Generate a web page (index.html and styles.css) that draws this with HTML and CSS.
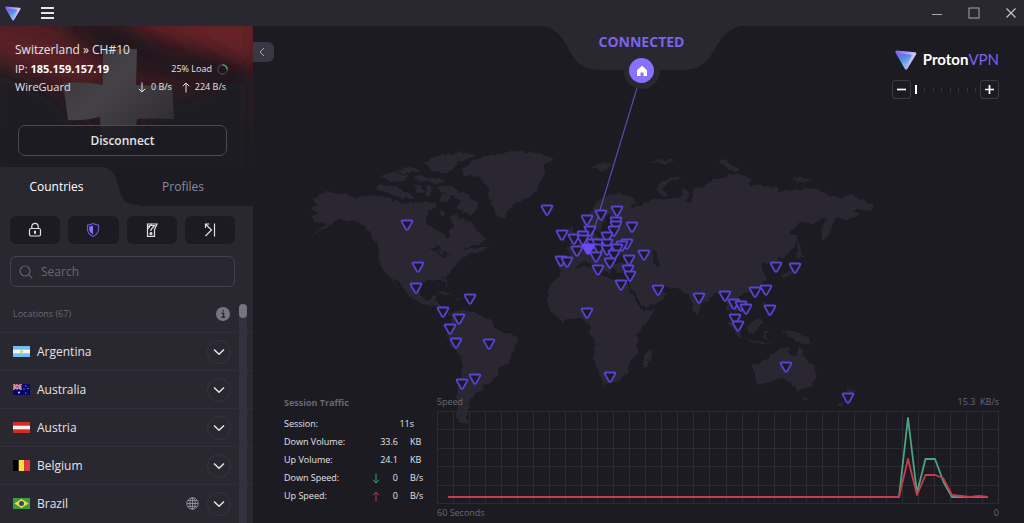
FILE: index.html
```html
<!DOCTYPE html>
<html lang="en">
<head>
<meta charset="utf-8">
<title>ProtonVPN</title>
<link rel="stylesheet" href="styles.css">
</head>
<body>
<svg class="defs" aria-hidden="true">
  <defs>
    <linearGradient id="logo-face" x1="0" y1="0" x2=".6" y2="1">
      <stop offset="0" stop-color="#7c5cf5"/><stop offset=".45" stop-color="#5b86e8"/><stop offset="1" stop-color="#6fe8d8"/>
    </linearGradient>
    <linearGradient id="logo-edge" x1="0" y1="0" x2="1" y2="0.2">
      <stop offset="0" stop-color="#7a5cf0"/><stop offset="1" stop-color="#d9ccff"/>
    </linearGradient>
    <symbol id="logo" viewBox="0 0 22 20">
      <path d="M1.5 0.5 20 2.2Q22 2.5 21 4.5L12.6 18.6Q11 20.800 9.800 18.400L.4 2.200Q0 .5 1.500 .5Z" fill="url(#logo-edge)"/>
      <path d="M1 3 15.500 4.600Q17.300 5 16.400 6.500L10.500 16.500 10.800 19.300Q10.200 19 9.800 18.400Z" fill="url(#logo-face)"/>
    </symbol>
    <symbol id="chevron" viewBox="0 0 12 8"><path d="M1 1.500 6 6.300 11 1.500" fill="none" stroke="currentColor" stroke-width="1.500"/></symbol>
    <symbol id="arrow-down" viewBox="0 0 8 11"><path d="M4 .5V10M.8 6.800 4 10 7.200 6.800" fill="none" stroke="currentColor"/></symbol>
    <symbol id="arrow-up" viewBox="0 0 8 11"><path d="M4 10.500V1M.8 4.200 4 1 7.200 4.200" fill="none" stroke="currentColor"/></symbol>
  </defs>
</svg>

<header class="titlebar">
  <svg class="titlebar-logo"><use href="#logo"/></svg>
  <button class="bare menu" aria-label="Menu"><svg width="13" height="12"><path d="M0 1H13M0 6H13M0 11H13" stroke="#e6e5ea" stroke-width="1.800"/></svg></button>
  <div class="window-buttons">
    <button class="bare" aria-label="Minimize"><svg width="12" height="12"><path d="M1 7.500H11" stroke="#aaa9b0"/></svg></button>
    <button class="bare" aria-label="Maximize"><svg width="12" height="12"><rect x="1" y="1" width="10" height="10" fill="none" stroke="#aaa9b0"/></svg></button>
    <button class="bare" aria-label="Close"><svg width="12" height="12"><path d="M1.500 1.500 10.500 10.500M10.500 1.500 1.500 10.500" stroke="#c4c3c9" stroke-width="1.200"/></svg></button>
  </div>
</header>

<div class="app">
  <aside class="sidebar">
    <section class="connection">
      <svg class="flag-backdrop" viewBox="0 0 253 141" preserveAspectRatio="none" aria-hidden="true">
        <defs>
          <linearGradient id="red" x1=".3" y1="0" x2=".2" y2="1">
            <stop offset="0" stop-color="#4f1e23"/><stop offset=".5" stop-color="#33191f"/><stop offset="1" stop-color="#1e1a21"/>
          </linearGradient>
          <linearGradient id="cross" x1="0" y1="0" x2="1" y2="1">
            <stop offset="0" stop-color="#373236"/><stop offset=".4" stop-color="#454247"/><stop offset="1" stop-color="#29272d"/>
          </linearGradient>
          <filter id="soft" x="-30%" y="-60%" width="160%" height="220%"><feGaussianBlur stdDeviation="9"/></filter>
        </defs>
        <rect width="253" height="141" fill="url(#red)"/>
        <g filter="url(#soft)">
          <path d="M50 -10 120 45 253 65V30L170 20 110 -10Z" fill="#24191e"/>
          <path d="M125 -10 170 5 253 38V-10Z" fill="#662427"/>
          <path d="M-10 0 40 10 110 50 80 55 -10 25Z" fill="#5c2226"/>
          <path d="M-10 35 60 70 100 120 253 90V150H-10Z" fill="#1f1a21"/>
          <path d="M160 75 253 52V160H120Z" fill="#1f1a21"/>
        </g>
        <path d="M103 24Q120 22 137 23L136 59Q155 61 172 58L174 93Q155 92 137 93L133 124H102L100 91Q82 95 68 94L63 57Q85 55 103 59Z" fill="url(#cross)"/>
        <path d="M0 141V105L253 95V141Z" fill="#1c1b22" opacity=".5"/>
      </svg>
      <div class="connection-info">
        <h1 class="server">Switzerland » CH#10</h1>
        <div class="info-row">
          <span>IP: <b>185.159.157.19</b></span>
          <span class="metric">25% Load
            <svg width="11" height="11"><circle cx="5.500" cy="5.500" r="4.700" fill="none" stroke="#55535d"/><path d="M5.500 .8A4.700 4.700 0 0 1 10.200 5.500" fill="none" stroke="#3fb68b" stroke-width="1.300"/></svg>
          </span>
        </div>
        <div class="info-row">
          <span>WireGuard</span>
          <span class="speeds">
            <span><svg width="8" height="11"><use href="#arrow-down"/></svg>0 B/s</span>
            <span><svg width="8" height="11"><use href="#arrow-up"/></svg>224 B/s</span>
          </span>
        </div>
      </div>
      <button class="disconnect">Disconnect</button>
    </section>

    <nav class="tabs">
      <svg class="tab-shape" width="140" height="39" aria-hidden="true"><path d="M0 0H98C112 0 116 8 118 17C121 32 124 38 140 38V39H0Z" fill="#292730"/></svg>
      <button class="tab tab-active">Countries</button>
      <button class="tab">Profiles</button>
    </nav>

    <div class="controls">
      <div class="quick">
        <button aria-label="Secure core"><svg width="14" height="16" fill="none" stroke="#e0dfe4" stroke-width="1.200"><rect x="1.500" y="6.500" width="11" height="7.500" rx="1.500"/><path d="M3.800 6.500V4.500A3.200 3.200 0 0 1 10.200 4.500V6.500"/><path d="M7 8.800V11.800" stroke-width="2"/></svg></button>
        <button aria-label="NetShield"><svg width="14" height="16"><path d="M7 1.500Q10 3 12.500 3V8Q12 12 7 14.500Q2 12 1.500 8V3Q4 3 7 1.500Z" fill="none" stroke="#6a55cf" stroke-width="1.200"/><path d="M7 3.500V12.500Q3.500 10.500 3.200 8V4.600Q5 4.500 7 3.500Z" fill="#8a70ff"/></svg></button>
        <button aria-label="Kill switch"><svg width="14" height="16" fill="none" stroke="#e0dfe4" stroke-width="1.200"><path d="M2.500 14.300V2H12L9.500 7.500V14.300Z"/><path d="M3 4.500 5 3.500H9.500L6 7.500V9M6.500 2 3 7" /><circle cx="6" cy="11.500" r="1" fill="#e0dfe4"/></svg></button>
        <button aria-label="Port forwarding"><svg width="14" height="16" fill="none" stroke="#e0dfe4" stroke-width="1.200"><path d="M2.500 14 8.500 8 3 2.500M2.500 6V2H6.500M11.500 1.500V14.500"/></svg></button>
      </div>
      <label class="search">
        <svg width="14" height="14" fill="none" stroke="#62606c" stroke-width="1.200"><circle cx="6" cy="6" r="5"/><path d="M9.700 9.700 13.300 13.300"/></svg>
        <input type="search" placeholder="Search" aria-label="Search">
      </label>
    </div>

    <section class="locations">
      <div class="locations-head">
        <h2>Locations (67)</h2>
        <svg width="14" height="14"><circle cx="7" cy="7" r="7" fill="#777581"/><path d="M5.500 6.200H7.500V10M5.300 10.200H9M7.200 3V4.600" fill="none" stroke="#292730" stroke-width="1.400"/></svg>
      </div>
      <ul>
        <li><svg class="flag" viewBox="0 0 17 11"><path fill="#6cc0f5" d="M0 0H17V11H0Z"/><path fill="#f4f4f2" d="M0 3.700H17V7.300H0Z"/><circle cx="8.500" cy="5.500" r="1.600" fill="#f2d24a"/></svg><span>Argentina</span><button class="expand" aria-label="Expand Argentina"><svg><use href="#chevron"/></svg></button></li>
        <li><svg class="flag" viewBox="0 0 17 11"><path fill="#05056b" d="M0 0H17V11H0Z"/><path d="M0 0 8.500 5.500M8.500 0 0 5.500M4.200 0V5.500M0 2.700H8.500" stroke="#e8dbe8" stroke-width="1.500"/><path d="M0 0 8.500 5.500M8.500 0 0 5.500M4.200 0V5.500M0 2.700H8.500" stroke="#c83746" stroke-width=".7"/><g fill="#dcdcf0"><circle cx="6" cy="8.500" r="1"/><circle cx="12.800" cy="2" r=".6"/><circle cx="15" cy="4.300" r=".6"/><circle cx="11" cy="5" r=".6"/><circle cx="12.800" cy="9" r=".6"/></g></svg><span>Australia</span><button class="expand" aria-label="Expand Australia"><svg><use href="#chevron"/></svg></button></li>
        <li><svg class="flag" viewBox="0 0 17 11"><path fill="#d62b25" d="M0 0H17V11H0Z"/><path fill="#f6f0ef" d="M0 3.700H17V7.300H0Z"/></svg><span>Austria</span><button class="expand" aria-label="Expand Austria"><svg><use href="#chevron"/></svg></button></li>
        <li><svg class="flag" viewBox="0 0 17 11"><path d="M0 0H6V11H0Z"/><path fill="#f8dc48" d="M5.700 0H11.300V11H5.700Z"/><path fill="#e0383c" d="M11.300 0H17V11H11.300Z"/></svg><span>Belgium</span><button class="expand" aria-label="Expand Belgium"><svg><use href="#chevron"/></svg></button></li>
        <li><svg class="flag" viewBox="0 0 17 11"><path fill="#3f9a48" d="M0 0H17V11H0Z"/><path fill="#f2dc3c" d="M8.500 1 15.500 5.500 8.500 10 1.500 5.500Z"/><circle cx="8.500" cy="5.500" r="2.500" fill="#2a4a8c"/></svg><span>Brazil</span>
          <svg class="globe" width="13" height="13" fill="none" stroke="#96949e" stroke-width=".9"><circle cx="6.500" cy="6.500" r="5.700"/><ellipse cx="6.500" cy="6.500" rx="2.700" ry="5.700"/><path d="M6.500 .8V12.200M.8 6.500H12.200M1.800 3.600H11.200M1.800 9.400H11.200"/></svg>
          <button class="expand" aria-label="Expand Brazil"><svg><use href="#chevron"/></svg></button></li>
      </ul>
      <div class="scroll-track"><div class="scroll-thumb"></div></div>
    </section>
  </aside>

  <main class="stage">
    <svg class="map" viewBox="253 26 771 497" preserveAspectRatio="xMidYMid slice" role="img" aria-label="World map of server locations">
      <defs>
        <filter id="coast" x="-2%" y="-2%" width="104%" height="104%">
          <feTurbulence type="fractalNoise" baseFrequency=".16" numOctaves="2" seed="4"/>
          <feDisplacementMap in="SourceGraphic" scale="6" xChannelSelector="R" yChannelSelector="G"/>
        </filter>
        <path id="pin" d="M-4.300 -4.500H4.300Q6 -4.500 5.100 -2.900L1.200 4Q0 5.800 -1.200 4L-5.100 -2.900Q-6 -4.500 -4.300 -4.500Z"/>
      </defs>
      <g class="land" filter="url(#coast)">
        <path d="M312 198 327 192 343 194 358 198 368 196 377 196 390 199 403 203 420 202 430 202 436 204 437 208 428 212 425 220 428 226 437 230 443 234 447 239 449 237 449 230 453 227 452 222 450 216 457 215 463 219 472 222 477 230 483 237 487 240 477 245 463 248 474 249 482 247 490 247 473 253 467 255 462 258 454 267 452 272 444 277 448 287 446 287 442 280 433 280 423 282 420 287 421 295 425 300 430 299 433 295 437 294 435 301 440 303 443 307 446 313 452 313 450 317 442 312 437 307 428 305 418 302 408 297 407 292 400 283 395 277 394 280 400 291 390 277 383 270 380 263 378 255 379 247 372 237 365 227 358 222 345 220 338 220 330 225 322 230 308 237 327 224 315 222 313 217 318 212 310 208 318 205Z"/>
        <path d="M452 313 460 309 473 312 483 317 493 322 494 328 503 332 517 337 519 341 513 348 510 362 498 368 497 375 490 383 483 387 484 390 475 393 473 398 468 402 470 407 466 412 466 418 469 424 462 423 457 417 457 403 458 387 462 377 462 357 457 352 450 342 446 335 449 328 452 320Z"/>
        <path d="M461 170 473 160 490 155 517 151 537 153 555 159 543 165 545 173 540 182 538 190 523 200 510 208 505 220 498 217 492 207 490 197 487 183 477 177 463 175Z"/>
        <path d="M422 163 437 156 457 153 477 155 463 160 452 168 447 173 433 172 428 166Z"/>
        <path d="M377 190 380 183 397 187 413 195 413 199 397 198 387 192Z"/>
        <path d="M380 177 396 171 408 177 402 181 390 182ZM397 170 412 166 420 170 406 174ZM412 177 420 175 446 181 440 183 418 181ZM414 186 422 184 424 192 418 193ZM425 187 432 186 430 195 427 197Z"/>
        <path d="M433 188 450 185 467 195 477 203 473 217 463 212 457 207 462 202 450 195 448 202 440 200 444 193ZM440 210 447 213 443 216Z"/>
        <path d="M542 209 547 206 553 209 549 213 543 212ZM565 233 570 226 577 236 578 243 568 245 572 238ZM559 236 565 235 564 241 559 241ZM592 166 604 163 616 164 608 169 600 172ZM648 162 662 160 676 160 664 164ZM657 190 662 181 676 176 682 177 670 182 662 189 668 195 659 193ZM719 162 726 160 733 166 741 169 733 171 724 166ZM790 179 803 178 812 181 798 182ZM855 192 862 192Z"/>
        <path d="M582 222 593 208 602 197 617 193 630 197 638 203 630 206 633 208 645 203 658 198 670 199 682 195 683 188 690 193 686 201 692 203 693 190 702 187 713 180 735 173 753 178 748 185 777 187 780 192 797 190 807 188 827 193 837 198 850 195 863 200 873 206 870 210 853 209 858 215 847 220 835 218 833 228 823 241 821 230 827 218 813 223 800 223 789 233 798 235 795 245 787 255 777 260 779 270 775 272 771 263 762 263 763 272 767 278 762 287 750 293 738 295 742 303 738 310 735 312 730 307 732 315 736 324 730 317 728 307 722 297 717 293 712 297 703 303 700 310 696 315 692 305 689 296 685 293 680 289 667 287 655 283 650 278 658 287 668 293 663 300 645 308 638 298 630 287 628 281 630 271 618 272 612 266 609 274 604 270 598 262 604 271 601 276 590 262 580 264 572 270 558 270 557 258 572 258 566 248 578 244 588 236 591 230 600 238 615 236 618 226 625 222 612 220 610 212 604 220 602 232 597 230 590 228 583 229Z"/>
        <path d="M563 270 555 280 548 290 547 305 553 315 562 321 580 318 588 322 589 330 595 342 593 355 597 370 604 384 618 382 627 372 630 360 638 352 637 335 650 318 655 309 643 312 635 300 628 287 627 282 607 277 598 275 597 268 583 267Z"/>
        <path d="M653 348 648 367 643 367 644 355ZM754 365 770 357 780 348 790 348 789 353 796 357 799 346 805 357 815 368 817 375 812 387 798 390 790 382 780 378 767 383 757 384 754 373ZM803 396 808 397 805 401ZM848 386 855 392 849 400ZM838 405 845 400 842 407ZM782 330 797 332 808 338 812 345 797 342 788 336ZM747 327 758 318 762 321 755 333 748 331ZM726 320 732 323 742 335 739 337ZM740 339 753 340 773 343 762 344ZM763 331 771 331 766 334 768 339 763 338ZM764 300 767 306 772 314 768 316 763 306ZM780 275 792 272 798 262 799 266 793 274 782 278ZM798 236 801 252 804 257 797 258ZM701 315 704 317 702 319ZM436 293 446 292 455 296 445 295ZM454 297 466 298 458 299Z"/>
        <g class="water"><path d="M614 259 622 256 634 261 625 264 615 263ZM652 250 658 254 657 258 660 267 655 266 653 258ZM430 248 440 246 442 250 437 251ZM437 251 440 258 444 252 450 255 445 258Z"/></g>
      </g>
      <path class="route" d="M637 88 590 243"/>
      <g id="pins" class="pins"></g>
      <use class="pin-active" href="#pin" x="588" y="249"/>
    </svg>

    <button class="bare collapse" aria-label="Collapse sidebar"><svg width="6" height="10"><path d="M5 1 1 5 5 9" fill="none" stroke="#aaa8b3"/></svg></button>

    <div class="status">
      <svg class="status-shape" width="196" height="64" aria-hidden="true">
        <path d="M0 0C32 9 18 44 58 44H138C176 44 164 10 196 0Z" fill="#292730"/>
        <circle cx="98" cy="45" r="18" fill="#292730"/>
      </svg>
      <strong>CONNECTED</strong>
      <span class="home"><svg width="12" height="12"><path d="M6 .8 11 5.300V11H7.500V7.500H4.500V11H1V5.300Z" fill="#fff"/></svg></span>
    </div>

    <div class="brand">
      <div class="brand-name"><svg class="brand-logo"><use href="#logo"/></svg><span>Proton<em>VPN</em></span></div>
      <div class="zoom">
        <button aria-label="Zoom out"><svg width="11" height="11"><path d="M1 5.500H10" stroke="#fff" stroke-width="1.700"/></svg></button>
        <div class="ticks"><i class="tick-on"></i><i></i><i></i><i></i><i></i><i></i><i></i><i></i></div>
        <button aria-label="Zoom in"><svg width="11" height="11"><path d="M1 5.500H10M5.500 1V10" stroke="#fff" stroke-width="1.700"/></svg></button>
      </div>
    </div>

    <section class="bottom">
      <div class="traffic">
        <h2>Session Traffic</h2>
        <table>
          <tr><th>Session:</th><td></td><td class="wide" colspan="2">11s</td></tr>
          <tr><th>Down Volume:</th><td></td><td class="num">33.6</td><td class="unit">KB</td></tr>
          <tr><th>Up Volume:</th><td></td><td class="num">24.1</td><td class="unit">KB</td></tr>
          <tr><th>Down Speed:</th><td class="down"><svg width="8" height="11"><use href="#arrow-down"/></svg></td><td class="num">0</td><td class="unit">B/s</td></tr>
          <tr><th>Up Speed:</th><td class="up"><svg width="8" height="11"><use href="#arrow-up"/></svg></td><td class="num">0</td><td class="unit">B/s</td></tr>
        </table>
      </div>
      <div class="chart">
        <div class="chart-label"><span>Speed</span><span>15.3&nbsp; KB/s</span></div>
        <svg class="plot" viewBox="0 0 562 93" preserveAspectRatio="none" role="img" aria-label="Speed over the last 60 seconds">
          <g id="grid" class="grid"></g>
          <path class="series series-down" d="M11 86H462L471 7 480 82 488.500 48H498L507 72 515 86H551"/>
          <path class="series series-up" d="M11 86H462L471 48 480 84 488.500 64H498L506 67 515 84 533 86 542 85 551 86"/>
        </svg>
        <div class="chart-label"><span>60 Seconds</span><span>0</span></div>
      </div>
    </section>
  </main>
</div>
<script src="script.js"></script>
</body>
</html>
```
FILE: styles.css
```css
* { box-sizing: border-box; }
body {
  margin: 0;
  height: 100vh;
  display: flex;
  flex-direction: column;
  overflow: hidden;
  background: #1c1b22;
  color: #e4e3e8;
  font: 12px/18px "Open Sans", "Noto Sans", sans-serif;
}
h1, h2, ul { margin: 0; padding: 0; font: inherit; }
button, input { font: inherit; color: inherit; }
button { cursor: pointer; padding: 0; }
svg { display: block; flex: none; }
.defs { position: absolute; width: 0; height: 0; }
.bare { border: 0; background: none; display: flex; align-items: center; justify-content: center; }

.titlebar { height: 26px; flex: none; display: flex; align-items: center; padding: 0 7px 0 5px; background: #292730; }
.titlebar-logo { width: 16px; height: 15px; }
.menu { margin-left: 20px; }
.window-buttons { margin-left: auto; display: flex; gap: 25px; }

.app { flex: 1; min-height: 0; display: flex; }
.sidebar { width: 253px; flex: none; display: flex; flex-direction: column; background: #292730; }

.connection { position: relative; height: 141px; flex: none; padding: 14px 25px 0 15px; }
.flag-backdrop { position: absolute; inset: 0; width: 100%; height: 100%; }
.connection-info, .disconnect { position: relative; }
.info-row { display: flex; justify-content: space-between; align-items: center; font-size: 11px; line-height: 18px; }
.server { line-height: 20px; }
.info-row b { color: #fff; }
.metric, .speeds, .speeds span { display: flex; align-items: center; gap: 5px; font-size: 9px; }
.speeds { gap: 10px; padding-right: 2px; }
.disconnect {
  display: block;
  width: 209px;
  height: 31px;
  margin: 29px 0 0 3px;
  border: 1px solid #4c4858;
  border-radius: 7px;
  background: #1c1b22a0;
  font-weight: 600;
}

.tabs { position: relative; height: 39px; flex: none; display: flex; background: #1c1b22; }
.tab-shape { position: absolute; left: 0; top: 0; }
.tab { position: relative; flex: 1; border: 0; background: none; color: #8d8a98; }
.tab-active { flex: 0 0 113px; color: #fff; }

.controls { padding: 10px 18px 0 10px; }
.quick { display: grid; grid-template-columns: repeat(4, 1fr); gap: 8px; }
.quick button { height: 28px; border: 0; border-radius: 6px; background: #1c1b22; display: flex; align-items: center; justify-content: center; }
.search { display: flex; align-items: center; gap: 8px; height: 31px; margin-top: 12px; padding: 0 8px; border: 1px solid #45424f; border-radius: 6px; }
.search input { flex: 1; min-width: 0; padding: 0; border: 0; outline: 0; background: none; }
.search input::placeholder { color: #6a6774; opacity: 1; }

.locations { position: relative; flex: 1; min-height: 0; margin-top: 8px; overflow: hidden; }
.locations-head { display: flex; align-items: center; justify-content: space-between; height: 37px; padding: 0 23px 0 13px; color: #6a6774; font-size: 9px; }
.locations li { display: flex; align-items: center; gap: 7px; height: 38px; padding: 0 22px 0 13px; border-top: 1px solid #302e39; }
.locations li span { flex: 1; }
.flag { width: 17px; height: 11px; }
.globe { margin-right: 1px; }
.expand { width: 24px; height: 24px; border: 1px solid #36343f; border-radius: 50%; background: none; display: flex; align-items: center; justify-content: center; }
.expand svg { width: 12px; height: 8px; }
.scroll-track { position: absolute; right: 6px; top: 9px; bottom: 0; width: 8px; border-radius: 4px 4px 0 0; background: #33313d; }
.scroll-thumb { height: 14px; border-radius: 4px; background: #76747f; }

.stage { position: relative; flex: 1; min-width: 0; display: flex; flex-direction: column; justify-content: space-between; }
.map { position: absolute; inset: 0; width: 100%; height: 100%; }
.land { fill: #292730; }
.water { fill: #1c1b22; }
.route { stroke: #5a49a8; stroke-width: 1.2; }
.pins { fill: #1c1b22; stroke: #5b42d6; stroke-width: 1.8; }
.pin-active { fill: #6a4af5; stroke: #6a4af5; stroke-width: 2; }

.collapse { position: absolute; left: 0; top: 16px; width: 21px; height: 20px; border-radius: 0 6px 6px 0; background: #393743; padding-right: 4px; }

.status { position: relative; align-self: center; width: 196px; margin-left: 6px; display: flex; flex-direction: column; align-items: center; gap: 7px; padding-top: 7px; }
.status-shape { position: absolute; left: 0; top: 0; }
.status strong { position: relative; color: #7b63ee; font-size: 14px; font-weight: 700; }
.home { position: relative; width: 25px; height: 25px; border-radius: 50%; background: #8a70ff; display: flex; align-items: center; justify-content: center; }

.brand { position: absolute; right: 25px; top: 23px; display: flex; flex-direction: column; align-items: flex-end; gap: 10px; }
.brand-name { display: flex; align-items: center; gap: 6px; height: 21px; color: #fff; font: 700 15px/21px Lato, sans-serif; }
.brand-name em { font-style: normal; font-weight: 400; color: #7b63ee; }
.brand-logo { width: 22px; height: 20px; }
.zoom { display: flex; align-items: center; gap: 4px; }
.zoom button { width: 19px; height: 19px; border: 1px solid #3b3945; border-radius: 3px; background: none; display: flex; align-items: center; justify-content: center; }
.ticks { width: 61px; display: flex; justify-content: space-between; align-items: center; }
.ticks i { width: 1px; height: 4px; background: #34323d; }
.ticks .tick-on { width: 2px; height: 9px; background: #fff; }

.bottom { position: relative; display: grid; grid-template-columns: 153px 1fr; padding: 0 25px 1px 31px; color: #6a6774; font-size: 9px; }
.traffic h2 { font-weight: 700; height: 22px; line-height: 20px; }
.traffic table { width: 143px; border-collapse: collapse; color: #e4e3e8; line-height: 18px; }
.traffic th, .traffic td { padding: 0; font-weight: 400; text-align: left; }
.traffic th { width: 88px; }
.traffic .num { text-align: right; }
.traffic .unit { width: 29px; padding-left: 12px; }
.traffic .wide { text-align: right; padding-right: 13px; }
.traffic .down { color: #3f9a78; }
.traffic .up { color: #b83b48; }
.chart-label { display: flex; justify-content: space-between; height: 18px; }
.plot { width: 100%; height: 93px; overflow: visible; }
.grid { stroke: #2c2a34; fill: none; }
.series { fill: none; stroke-width: 1.8; stroke-linejoin: round; vector-effect: non-scaling-stroke; }
.series-down { stroke: #4aa583; }
.series-up { stroke: #c93b4d; }
```
FILE: script.js
```js
const svgNs = "http://www.w3.org/2000/svg";

// Server locations in map units.
const servers = [
  [407, 225], [418, 267], [416, 288], [547, 210], [470, 299], [443, 312],
  [459, 319], [450, 329], [456, 343], [489, 344], [475, 379], [462, 384],
  [601, 215], [617, 211], [587, 220], [616, 222], [616, 226], [632, 227],
  [562, 235], [574, 239], [614, 231], [590, 231], [583, 236], [583, 240],
  [607, 237], [592, 244], [598, 244], [607, 244], [599, 249], [607, 250],
  [577, 251], [561, 261], [567, 262], [627, 244], [622, 246], [617, 249],
  [614, 255], [596, 257], [610, 263], [598, 270], [644, 255], [629, 260],
  [628, 270], [630, 276], [621, 285], [658, 290], [587, 313], [610, 377],
  [699, 298], [776, 267], [795, 268], [725, 296], [734, 304], [741, 306],
  [746, 309], [755, 292], [766, 290], [770, 310], [735, 319], [738, 326],
  [786, 367], [848, 398]
];
const pins = document.getElementById("pins");
for (const [x, y] of servers) {
  const pin = document.createElementNS(svgNs, "use");
  pin.setAttribute("href", "#pin");
  pin.setAttribute("x", x);
  pin.setAttribute("y", y);
  pins.append(pin);
}

// Chart grid: 35 columns by 5 rows.
let lines = "";
for (let i = 0; i <= 35; i++) lines += `M${Math.round(i * 561 / 35) + 0.5} 0V93`;
for (let i = 0; i <= 5; i++) lines += `M0 ${Math.round(i * 92 / 5) + 0.5}H562`;
const grid = document.createElementNS(svgNs, "path");
grid.setAttribute("d", lines);
document.getElementById("grid").append(grid);
```
